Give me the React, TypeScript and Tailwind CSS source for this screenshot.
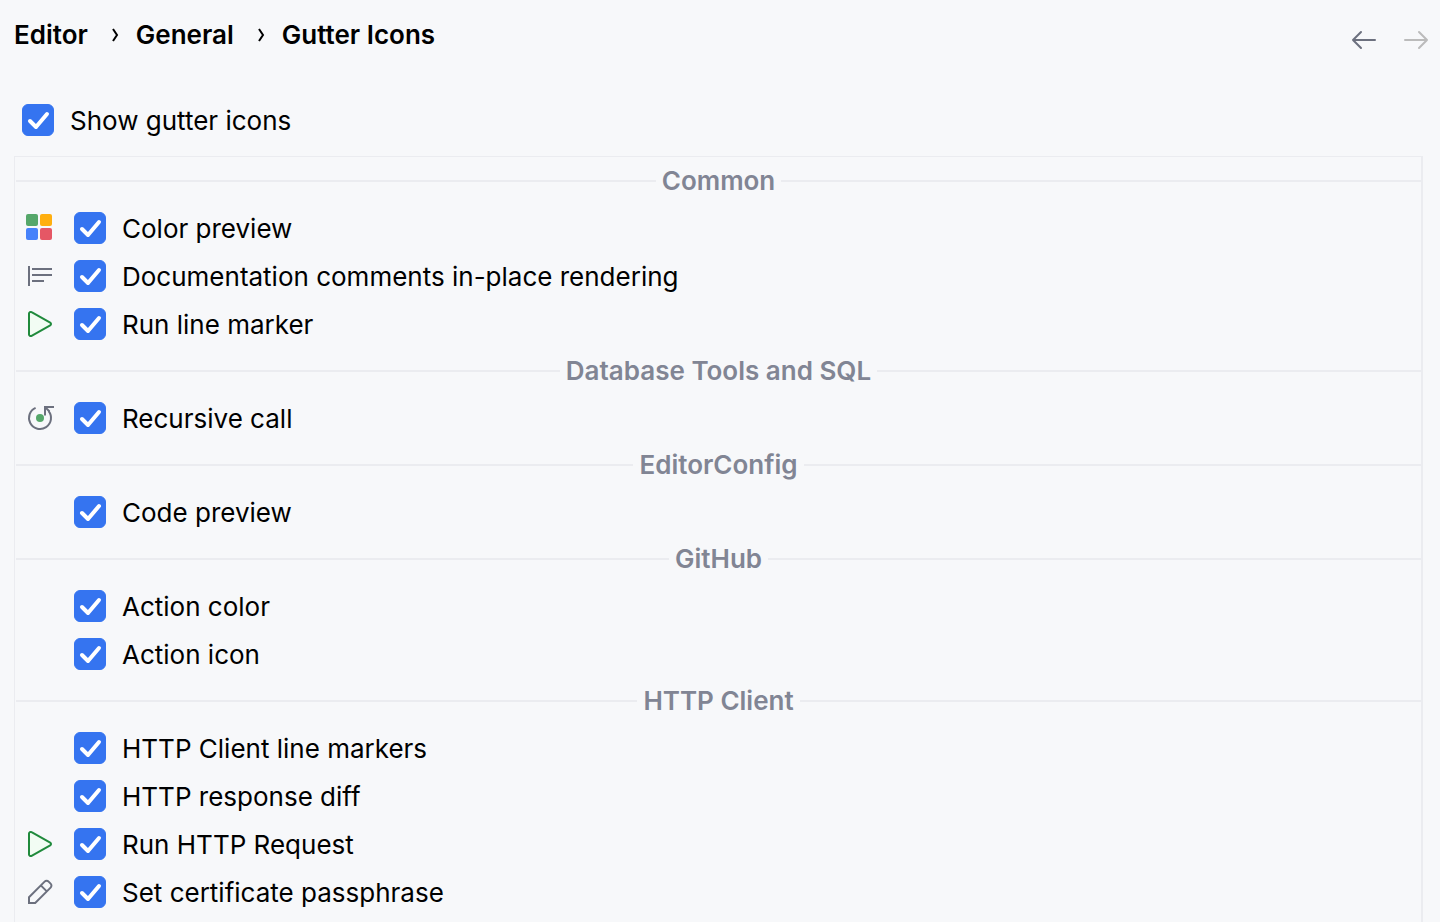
import React, { useState } from 'react';

type IconName = 'colors' | 'doc' | 'run' | 'recursive' | 'edit';

interface GutterItem {
  id: string;
  label: string;
  icon?: IconName;
}

interface GutterGroup {
  title: string;
  items: GutterItem[];
}

const groups: GutterGroup[] = [
  {
    title: 'Common',
    items: [
      { id: 'color-preview', label: 'Color preview', icon: 'colors' },
      { id: 'doc-rendering', label: 'Documentation comments in-place rendering', icon: 'doc' },
      { id: 'run-line', label: 'Run line marker', icon: 'run' },
    ],
  },
  {
    title: 'Database Tools and SQL',
    items: [{ id: 'recursive-call', label: 'Recursive call', icon: 'recursive' }],
  },
  {
    title: 'EditorConfig',
    items: [{ id: 'code-preview', label: 'Code preview' }],
  },
  {
    title: 'GitHub',
    items: [
      { id: 'action-color', label: 'Action color' },
      { id: 'action-icon', label: 'Action icon' },
    ],
  },
  {
    title: 'HTTP Client',
    items: [
      { id: 'http-markers', label: 'HTTP Client line markers' },
      { id: 'http-diff', label: 'HTTP response diff' },
      { id: 'http-run', label: 'Run HTTP Request', icon: 'run' },
      { id: 'http-cert', label: 'Set certificate passphrase', icon: 'edit' },
    ],
  },
];

const GutterIcon: React.FC<{ name: IconName }> = ({ name }) => (
  <svg viewBox="0 0 32 32" className="size-8" fill="none" aria-hidden="true">
    {name === 'colors' && (
      <>
        <rect x="2" y="2" width="12" height="12" rx="2" fill="#55A76A" />
        <rect x="16" y="2" width="12" height="12" rx="2" fill="#FFAF0F" />
        <rect x="2" y="16" width="12" height="12" rx="2" fill="#4682FA" />
        <rect x="16" y="16" width="12" height="12" rx="2" fill="#E55765" />
      </>
    )}
    {name === 'doc' && (
      <path d="M5 7v18M9 9h18M9 15h18M9 21h10" stroke="#6C707E" strokeWidth="2" strokeLinecap="square" />
    )}
    {name === 'run' && (
      <path
        d="M5 5.600v20.800a1.700 1.700 0 0 0 2.600 1.400l18.600-10.400a1.600 1.600 0 0 0 0-2.800L7.600 4.200A1.700 1.700 0 0 0 5 5.600Z"
        fill="#F2FCF3"
        stroke="#208A3C"
        strokeWidth="2"
      />
    )}
    {name === 'recursive' && (
      <>
        <circle cx="16" cy="16" r="4" fill="#55A76A" />
        <path d="M11.600 5.900A11 11 0 1 0 24.600 9.100" stroke="#6C707E" strokeWidth="2" />
        <path d="M21 13.500V5h9M21.500 5.500l4 4" stroke="#6C707E" strokeWidth="2" />
      </>
    )}
    {name === 'edit' && (
      <path
        d="M5 21.200 20.600 5.600a2.800 2.800 0 0 1 4 0l2 2a2.800 2.800 0 0 1 0 4L11.200 27H5ZM16.800 9.400l6 6"
        stroke="#6C707E"
        strokeWidth="2"
      />
    )}
  </svg>
);

interface CheckRowProps {
  id: string;
  label: string;
  checked: boolean;
  onToggle: (id: string) => void;
}

const CheckRow: React.FC<CheckRowProps> = ({ id, label, checked, onToggle }) => (
  <label htmlFor={id} className="flex items-center gap-4">
    <span className="relative size-8">
      <input
        id={id}
        type="checkbox"
        checked={checked}
        onChange={() => onToggle(id)}
        className="block size-8 appearance-none rounded-md border border-[#c9ccd6] bg-white checked:border-[#3574f0] checked:bg-[#3574f0]"
      />
      {checked && (
        <svg viewBox="0 0 32 32" className="pointer-events-none absolute inset-0 size-8" fill="none" aria-hidden="true">
          <path d="m8 17 6 6L25 10" stroke="#fff" strokeWidth="4" strokeLinecap="round" strokeLinejoin="round" />
        </svg>
      )}
    </span>
    <span className="h-8 leading-[34px]">{label}</span>
  </label>
);

const Separator: React.FC<{ title: string }> = ({ title }) => (
  <div className="flex h-[46px] items-center gap-1.5 pl-px">
    <span className="h-0.5 flex-1 bg-[#ebecf0]" />
    <h2 className="font-semibold text-[#818594]">{title}</h2>
    <span className="h-0.5 flex-1 bg-[#ebecf0]" />
  </div>
);

const Chevron: React.FC = () => (
  <svg viewBox="0 0 8 16" className="h-4 w-2" fill="none" aria-hidden="true">
    <path d="m2 2 4 6-4 6" stroke="#000" strokeWidth="2" />
  </svg>
);

const crumbs = ['Editor', 'General'];

const App: React.FC = () => {
  const [disabled, setDisabled] = useState<string[]>([]);

  const toggle = (id: string) => {
    setDisabled(prev => (prev.includes(id) ? prev.filter(x => x !== id) : [...prev, id]));
  };

  return (
    <main className="flex min-h-screen flex-col bg-[#f7f8fa] pr-[17px] pl-3.5 font-['Inter',sans-serif] text-[26px] leading-8 text-black">
      <header className="-mr-[9px] flex h-[72px] items-start justify-between">
        <nav aria-label="Breadcrumb" className="flex items-center pt-[19px] font-semibold">
          {crumbs.map(c => (
            <React.Fragment key={c}>
              <a href="#">{c}</a>
              <span className="flex w-12 justify-center pl-1.5">
                <Chevron />
              </span>
            </React.Fragment>
          ))}
          <h1>Gutter Icons</h1>
        </nav>
        <div className="flex gap-5 pt-6">
          <button type="button" aria-label="Back">
            <svg viewBox="0 0 32 32" className="size-8" fill="none">
              <path d="M27 16H5M13 8l-8 8 8 8" stroke="#6C707E" strokeWidth="2" strokeLinecap="round" strokeLinejoin="round" />
            </svg>
          </button>
          <button type="button" aria-label="Forward" disabled>
            <svg viewBox="0 0 32 32" className="size-8" fill="none">
              <path d="M5 16h22M19 8l8 8-8 8" stroke="#BBBBBB" strokeWidth="2" strokeLinecap="round" strokeLinejoin="round" />
            </svg>
          </button>
        </div>
      </header>

      <div className="flex h-[84px] items-center pt-3 pl-2">
        <CheckRow id="show-all" label="Show gutter icons" checked={!disabled.includes('show-all')} onToggle={toggle} />
      </div>

      <div className="flex-1 border-t border-r-2 border-l border-[#ebecf0] pt-px">
        {groups.map(group => (
          <section key={group.title}>
            <Separator title={group.title} />
            <ul>
              {group.items.map(item => (
                <li key={item.id} className="flex h-12 items-center gap-[18px] pl-[9px]">
                  <span className="size-8">{item.icon && <GutterIcon name={item.icon} />}</span>
                  <CheckRow id={item.id} label={item.label} checked={!disabled.includes(item.id)} onToggle={toggle} />
                </li>
              ))}
            </ul>
          </section>
        ))}
      </div>
    </main>
  );
};

export default App;
